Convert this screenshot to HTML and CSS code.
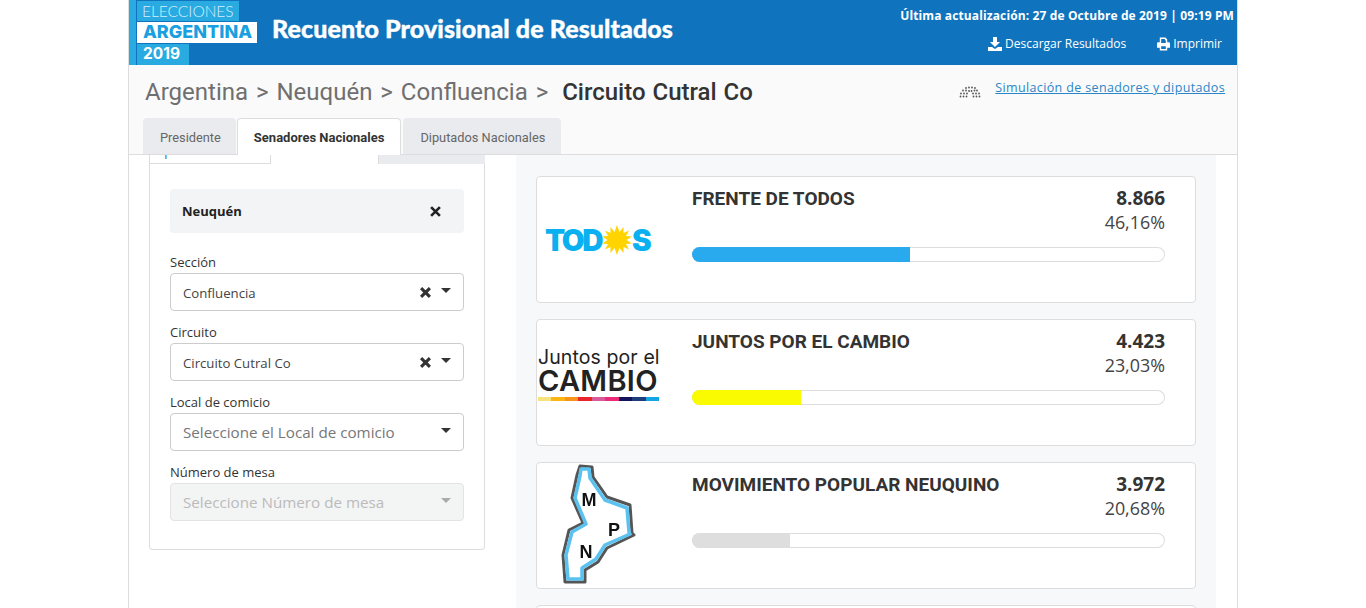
FILE: index.html
```html
<!DOCTYPE html>
<html>
<head>
  <meta name='viewport' content='width=device-width, initial-scale=1'>
  <meta charset='UTF-8'>
  <title>Recuento Provisional de Resultados</title>
  <link rel="stylesheet" href="styles.css">
</head>
<body>
  <div class='page'>
    <header class='top'>
      <div class='brand'>
        <span class='b1'>ELECCIONES</span>
        <span class='b2'>ARGENTINA</span>
        <span class='b3'>2019</span>
      </div>
      <h1>Recuento Provisional de Resultados</h1>
      <div class='top-r'>
        <div class='upd'>Última actualización: 27 de Octubre de 2019 | 09:19 PM</div>
        <div class='acts'>
          <span class='act'>
            <svg width='14' height='14' viewBox='0 0 14 14'><path fill='#fff' d='M5 0h4v5h3L7 10 2 5h3zM0 10h4l3 2 3-2h4v4H0z'/></svg>
            Descargar Resultados
          </span>
          <span class='act'>
            <svg width='13' height='14' viewBox='0 0 14 14'><path fill='#fff' fill-rule='evenodd' d='M3 0h6l2 2v3h1.500Q14 5 14 6.500V11h-3v3H3v-3H0V6.500Q0 5 1.500 5H3zM4.500 1.500V6h5V3H8.500V1.500zM4.500 9.500v3h5v-3z'/></svg>
            Imprimir
          </span>
        </div>
      </div>
    </header>

    <div class='sub'>
      <div class='sub-row'>
        <div class='crumbs'>Argentina &gt; Neuquén &gt; Confluencia &gt; <b>Circuito Cutral Co</b></div>
        <div class='sim'>
          <svg width='22' height='12' viewBox='0 0 22 12' fill='#555'>
            <circle cx='1.500' cy='10.500' r='.9'/><circle cx='4.500' cy='10.500' r='.9'/><circle cx='7.500' cy='10.500' r='.9'/><circle cx='14.500' cy='10.500' r='.9'/><circle cx='17.500' cy='10.500' r='.9'/><circle cx='20.500' cy='10.500' r='.9'/>
            <circle cx='2' cy='7.500' r='.9'/><circle cx='5' cy='7.500' r='.9'/><circle cx='8' cy='7.500' r='.9'/><circle cx='14' cy='7.500' r='.9'/><circle cx='17' cy='7.500' r='.9'/><circle cx='20' cy='7.500' r='.9'/>
            <circle cx='4' cy='4.500' r='.9'/><circle cx='7' cy='4.500' r='.9'/><circle cx='10' cy='5' r='.9'/><circle cx='12.500' cy='5' r='.9'/><circle cx='15.500' cy='4.500' r='.9'/><circle cx='18' cy='4.500' r='.9'/>
            <circle cx='7' cy='2' r='.9'/><circle cx='10' cy='1.500' r='.9'/><circle cx='13' cy='1.500' r='.9'/><circle cx='16' cy='2' r='.9'/>
          </svg>
          <a href='#'>Simulación de senadores y diputados</a>
        </div>
      </div>
      <div class='tabs'>
        <span class='tab'>Presidente</span>
        <span class='tab on'>Senadores Nacionales</span>
        <span class='tab'>Diputados Nacionales</span>
      </div>
    </div>

    <div class='main'>
      <aside class='side'>
        <div class='side-tabs'>
          <span class='st st1'>por</span>
          <span class='st st2'></span>
          <span class='st st3'></span>
        </div>
        <div class='box'>
          <div class='chosen'>
            <b>Neuquén</b>
            <svg width='11' height='11' viewBox='0 0 10 10'><path stroke='#222' stroke-width='2.400' d='M1 1l8 8M9 1l-8 8'/></svg>
          </div>

          <label>Sección</label>
          <div class='sel'>
            <span>Confluencia</span>
            <svg class='x' width='11' height='11' viewBox='0 0 10 10'><path stroke='#333' stroke-width='2.800' d='M1 1l8 8M9 1l-8 8'/></svg>
            <i class='caret'></i>
          </div>

          <label>Circuito</label>
          <div class='sel'>
            <span>Circuito Cutral Co</span>
            <svg class='x' width='11' height='11' viewBox='0 0 10 10'><path stroke='#333' stroke-width='2.800' d='M1 1l8 8M9 1l-8 8'/></svg>
            <i class='caret'></i>
          </div>

          <label>Local de comicio</label>
          <div class='sel ph'>
            <span>Seleccione el Local de comicio</span>
            <i class='caret'></i>
          </div>

          <label>Número de mesa</label>
          <div class='sel ph off'>
            <span>Seleccione Número de mesa</span>
            <i class='caret'></i>
          </div>
        </div>
      </aside>

      <section class='res'>
        <div class='card'>
          <div class='logo'>
            <div class='todos'>TOD<svg width='30' height='30' viewBox='-15 -15 30 30'><polygon fill='#ffd400' points='0,-15 2.500,-8 6.500,-13 6.500,-7 12,-9.500 9,-4 15,-3.500 9.500,0 15,3.500 9,4 12,9.500 6.500,7 6.500,13 2.500,8 0,15 -2.500,8 -6.500,13 -6.500,7 -12,9.500 -9,4 -15,3.500 -9.500,0 -15,-3.500 -9,-4 -12,-9.500 -6.500,-7 -6.500,-13 -2.500,-8'/></svg>S</div>
          </div>
          <div class='info'>
            <div class='head'>
              <div class='name'>FRENTE DE TODOS</div>
              <div class='nums'><b>8.866</b><span>46,16%</span></div>
            </div>
            <div class='bar'><div class='fill' style='width:46.16%;background:#29a9ee'></div></div>
          </div>
        </div>

        <div class='card'>
          <div class='logo jxc-wrap'>
            <div class='jxc'>
              <div class='j1'>Juntos por el</div>
              <div class='j2'>CAMBIO</div>
              <div class='stripe'><i class='s1'></i><i class='s2'></i><i class='s3'></i><i class='s4'></i><i class='s5'></i><i class='s6'></i><i class='s7'></i><i class='s8'></i><i class='s9'></i></div>
            </div>
          </div>
          <div class='info'>
            <div class='head'>
              <div class='name'>JUNTOS POR EL CAMBIO</div>
              <div class='nums'><b>4.423</b><span>23,03%</span></div>
            </div>
            <div class='bar'><div class='fill' style='width:23.03%;background:#fafa00'></div></div>
          </div>
        </div>

        <div class='card'>
          <div class='logo mpn-wrap'>
            <svg width='76' height='122' viewBox='0 0 76 122'>
              <path fill='#fff' stroke='#555' stroke-width='3' stroke-linejoin='round' d='M20 2L32 3L33 13L47 33L70 41L72 69L74 71L47 84L38 98L25 106L25 118L5 118L3 91L9 66L23 59L12 34L17 11Z'/>
              <path fill='none' stroke='#5bc2f0' stroke-width='3.500' stroke-linejoin='round' d='M21 5L29 5L30 14L45 36L67 44L69 68L70 70L45 81L36 95L22 104L22 115L8 115L6 91L12 68L26 60L15 34L20 12Z'/>
              <text x='29' y='42' class='mp'>M</text>
              <text x='54' y='72' class='mp'>P</text>
              <text x='26' y='94' class='mp'>N</text>
            </svg>
          </div>
          <div class='info'>
            <div class='head'>
              <div class='name'>MOVIMIENTO POPULAR NEUQUINO</div>
              <div class='nums'><b>3.972</b><span>20,68%</span></div>
            </div>
            <div class='bar'><div class='fill' style='width:20.68%;background:#dedede'></div></div>
          </div>
        </div>

        <div class='card'></div>
      </section>
    </div>
  </div>
</body>
</html>
```

FILE: styles.css
```css
html,body{margin:0;padding:0;height:608px;overflow:hidden;}
body{font-family:"Open Sans",sans-serif;background:#fff;color:#333;font-size:13px;}
*{box-sizing:border-box;}
.page{width:1110px;height:608px;margin:0 auto;border-left:1px solid #ddd;border-right:1px solid #ddd;overflow:hidden;}

.top{height:65px;margin:0 -1px;background:#0f74bd;color:#fff;display:flex;position:relative;}
.brand{width:129px;height:65px;margin-right:15px;border-left:8px solid #29abe2;padding-left:1px;display:flex;flex-direction:column;align-items:flex-start;font-family:Lato,sans-serif;flex:none;}
.brand span{display:block;white-space:nowrap;}
.b1{margin-top:1px;width:102px;height:20px;background:#29abe2;color:#d5eefb;font-size:15.500px;line-height:20px;font-weight:300;padding-left:5px;}
.b2{margin-top:1px;width:120px;height:21px;background:#fff;color:#1a9fe0;font-family:Inter,sans-serif;font-size:18px;line-height:20px;font-weight:800;padding-left:6px;}
.b3{margin-top:1px;width:52px;height:21px;background:#29abe2;color:#fff;font-family:Inter,sans-serif;font-size:15.500px;line-height:19px;font-weight:700;padding-left:6px;}
h1{margin:0;font-family:Lato,sans-serif;font-size:25px;line-height:56px;font-weight:900;white-space:nowrap;letter-spacing:.09px;-webkit-text-stroke:.4px #fff;}
.top-r{margin-left:auto;padding-right:4px;text-align:right;}
.upd{font-size:12px;font-weight:700;line-height:16px;margin-top:8px;white-space:nowrap;letter-spacing:.12px;}
.acts{display:flex;justify-content:flex-end;gap:31px;margin-top:12px;padding-right:12px;font-size:12px;line-height:16px;}
.act{display:flex;align-items:center;gap:3px;}

.sub{height:90px;background:#fafafa;border-bottom:1px solid #ddd;display:flex;flex-direction:column;}
.sub-row{display:flex;justify-content:space-between;height:53px;padding:11px 12px 0 16px;}
.crumbs{font-family:Roboto,sans-serif;font-size:24px;line-height:32px;color:#6f6f6f;white-space:nowrap;word-spacing:2px;}
.crumbs b{color:#333;font-weight:500;margin-left:6px;word-spacing:1px;}
.sim{display:flex;gap:14px;align-items:flex-start;padding-top:3px;}
.sim svg{margin-top:7px;}
.sim a{color:#2a86c8;font-size:12.500px;line-height:18px;text-decoration:underline;letter-spacing:.36px;white-space:nowrap;}
.tabs{display:flex;gap:1px;padding-left:14px;height:36px;}
.tab{background:#e9ebef;border-radius:4px 4px 0 0;font-family:Roboto,sans-serif;font-size:12.800px;line-height:40px;color:#666;padding:0 15px 0 17px;white-space:nowrap;}
.tab.on{background:#fff;border:1px solid #ddd;border-bottom:none;color:#333;font-size:13px;font-weight:700;margin-bottom:-1px;line-height:38px;padding:0 16px;}
.tab:last-child{margin-left:1px;padding:0 16px 0 17px;}

.main{display:flex;height:453px;}
.side{width:336px;margin-left:20px;flex:none;}
.side-tabs{display:flex;align-items:flex-start;height:9px;overflow:hidden;}
.st{display:block;height:9px;flex:none;}
.st1{width:122px;height:14px;margin-top:-5px;border-right:1px solid #ddd;border-bottom:1px solid #ddd;border-left:1px solid #ddd;padding-left:14px;color:#2a7fc0;font-size:14px;line-height:0;}
.st2{width:107px;}
.st3{flex:1;background:#e9ebef;border-left:1px solid #ddd;}
.box{height:387px;margin-top:-1px;border:1px solid #ddd;border-top-color:#fff;border-radius:0 0 4px 4px;padding:25px 20px 0;}
.chosen{height:44px;background:#f3f4f6;border-radius:4px;display:flex;justify-content:space-between;align-items:center;padding:0 23px 0 12px;margin-bottom:19px;color:#222;}
.chosen b{font-weight:700;}
label{display:block;line-height:21px;height:21px;color:#333;font-size:13px;}
.sel{height:38px;border:1px solid #ccc;border-radius:4px;display:flex;align-items:center;padding:0 12px;margin-bottom:11px;font-size:13.200px;color:#444;}
.sel span{flex:1;padding-top:1px;}
.sel .x{margin-right:10px;}
.caret{width:0;height:0;border-left:5px solid transparent;border-right:5px solid transparent;border-top:5px solid #333;margin-top:-3px;}
.ph{font-size:15.200px;color:#777;}
.ph span{padding-top:0;}
.off{background:#f3f4f4;border-color:#e3e3e3;color:#bbb;}
.off .caret{border-top-color:#aaa;}

.res{width:700px;margin-left:31px;background:#f7f8fa;padding:21px 20px 0;flex:none;}
.card{height:127px;margin-bottom:16px;background:#fff;border:1px solid #ddd;border-radius:4px;display:flex;}
.logo{width:155px;flex:none;display:flex;align-items:center;}
.info{width:473px;padding-top:9px;}
.head{display:flex;justify-content:space-between;height:61px;}
.name{font-family:Roboto,sans-serif;font-weight:700;font-size:19px;line-height:25px;color:#333;white-space:nowrap;}
.nums{text-align:right;font-size:19px;}
.nums b{display:block;line-height:24px;font-weight:700;color:#333;}
.nums span{display:block;line-height:24px;color:#444;font-weight:400;font-size:17.900px;}
.bar{height:15px;border-radius:8px;overflow:hidden;box-shadow:inset 0 0 0 1px #ddd;}
.fill{height:15px;}

.todos{display:flex;align-items:center;margin:0 0 0 8px;color:#0ab0ef;font-family:Inter,Roboto,sans-serif;font-weight:900;font-size:29.500px;line-height:30px;letter-spacing:-2.500px;}
.todos svg{margin:0 0 0 1px;flex:none;}

.jxc-wrap{align-items:flex-start;}
.jxc{width:121px;margin-top:25px;margin-left:1px;}
.j1{font-family:Inter,sans-serif;font-size:19.500px;line-height:24px;color:#222;white-space:nowrap;letter-spacing:.1px;}
.j2{font-family:Inter,sans-serif;font-size:29px;line-height:24px;font-weight:600;color:#222;white-space:nowrap;letter-spacing:.3px;}
.stripe{display:flex;height:4px;margin-top:4px;}
.stripe i{flex:1;display:block;}
.s1{background:#f8e27c;}
.s2{background:#fbb613;}
.s3{background:#f7941d;}
.s4{background:#e9252b;}
.s5{background:#d95a9a;}
.s6{background:#ec2a7a;}
.s7{background:#14145e;}
.s8{background:#1c3f7c;}
.s9{background:#14a5e6;}

.mpn-wrap{padding-left:23px;align-items:flex-start;}
.mpn-wrap svg{margin-top:1px;display:block;filter:blur(.4px);}
.mp{font-family:"Liberation Sans",sans-serif;font-weight:700;font-size:18px;fill:#111;text-anchor:middle;}
```
